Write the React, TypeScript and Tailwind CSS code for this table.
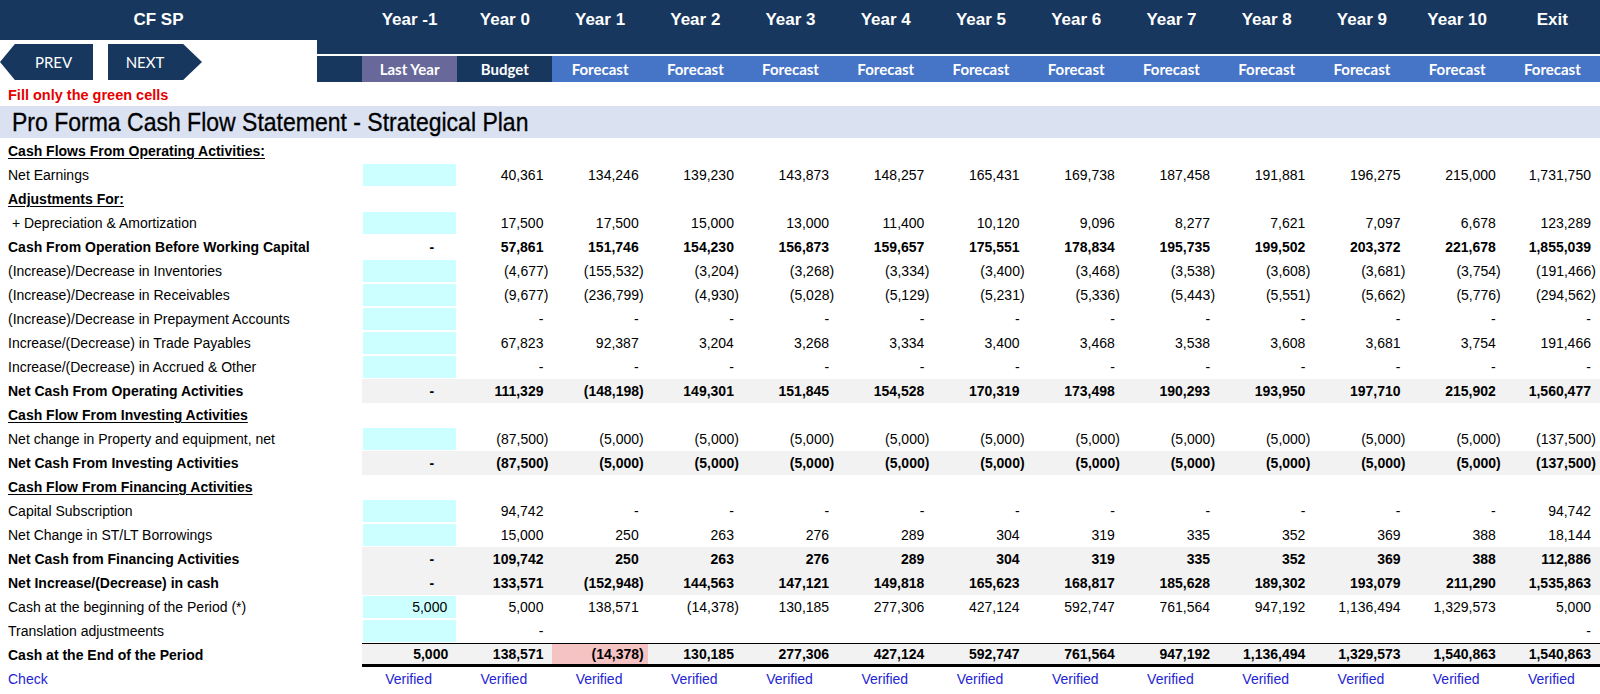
import React from 'react';

type Kind = 'section' | 'item' | 'bold' | 'total' | 'end';

type Row = {
  label: string;
  kind: Kind;
  first?: string;
  cyan?: boolean;
  values: string[];
  red?: number;
};

const years = ['Year -1', 'Year 0', 'Year 1', 'Year 2', 'Year 3', 'Year 4', 'Year 5', 'Year 6', 'Year 7', 'Year 8', 'Year 9', 'Year 10', 'Exit'];

const dash12 = Array(12).fill('-');
const empty12 = Array(12).fill('');
const inv5000 = Array(10).fill('(5,000)');

const rows: Row[] = [
  { label: 'Cash Flows From Operating Activities:', kind: 'section', values: empty12 },
  {
    label: 'Net Earnings',
    kind: 'item',
    cyan: true,
    values: ['40,361', '134,246', '139,230', '143,873', '148,257', '165,431', '169,738', '187,458', '191,881', '196,275', '215,000', '1,731,750'],
  },
  { label: 'Adjustments For:', kind: 'section', values: empty12 },
  {
    label: ' + Depreciation & Amortization',
    kind: 'item',
    cyan: true,
    values: ['17,500', '17,500', '15,000', '13,000', '11,400', '10,120', '9,096', '8,277', '7,621', '7,097', '6,678', '123,289'],
  },
  {
    label: 'Cash From Operation Before Working Capital',
    kind: 'bold',
    first: '-',
    values: ['57,861', '151,746', '154,230', '156,873', '159,657', '175,551', '178,834', '195,735', '199,502', '203,372', '221,678', '1,855,039'],
  },
  {
    label: '(Increase)/Decrease in Inventories',
    kind: 'item',
    cyan: true,
    values: ['(4,677)', '(155,532)', '(3,204)', '(3,268)', '(3,334)', '(3,400)', '(3,468)', '(3,538)', '(3,608)', '(3,681)', '(3,754)', '(191,466)'],
  },
  {
    label: '(Increase)/Decrease in Receivables',
    kind: 'item',
    cyan: true,
    values: ['(9,677)', '(236,799)', '(4,930)', '(5,028)', '(5,129)', '(5,231)', '(5,336)', '(5,443)', '(5,551)', '(5,662)', '(5,776)', '(294,562)'],
  },
  { label: '(Increase)/Decrease in Prepayment Accounts', kind: 'item', cyan: true, values: dash12 },
  {
    label: 'Increase/(Decrease) in Trade Payables',
    kind: 'item',
    cyan: true,
    values: ['67,823', '92,387', '3,204', '3,268', '3,334', '3,400', '3,468', '3,538', '3,608', '3,681', '3,754', '191,466'],
  },
  { label: 'Increase/(Decrease) in Accrued & Other', kind: 'item', cyan: true, values: dash12 },
  {
    label: 'Net Cash From Operating Activities',
    kind: 'total',
    first: '-',
    values: ['111,329', '(148,198)', '149,301', '151,845', '154,528', '170,319', '173,498', '190,293', '193,950', '197,710', '215,902', '1,560,477'],
  },
  { label: 'Cash Flow From Investing Activities', kind: 'section', values: empty12 },
  { label: 'Net change in Property and equipment, net', kind: 'item', cyan: true, values: ['(87,500)', ...inv5000, '(137,500)'] },
  { label: 'Net Cash From Investing Activities', kind: 'total', first: '-', values: ['(87,500)', ...inv5000, '(137,500)'] },
  { label: 'Cash Flow From Financing Activities', kind: 'section', values: empty12 },
  { label: 'Capital Subscription', kind: 'item', cyan: true, values: ['94,742', ...Array(10).fill('-'), '94,742'] },
  {
    label: 'Net Change in ST/LT Borrowings',
    kind: 'item',
    cyan: true,
    values: ['15,000', '250', '263', '276', '289', '304', '319', '335', '352', '369', '388', '18,144'],
  },
  {
    label: 'Net Cash from Financing Activities',
    kind: 'total',
    first: '-',
    values: ['109,742', '250', '263', '276', '289', '304', '319', '335', '352', '369', '388', '112,886'],
  },
  {
    label: 'Net Increase/(Decrease) in cash',
    kind: 'total',
    first: '-',
    values: ['133,571', '(152,948)', '144,563', '147,121', '149,818', '165,623', '168,817', '185,628', '189,302', '193,079', '211,290', '1,535,863'],
  },
  {
    label: 'Cash at the beginning of the Period (*)',
    kind: 'item',
    cyan: true,
    first: '5,000',
    values: ['5,000', '138,571', '(14,378)', '130,185', '277,306', '427,124', '592,747', '761,564', '947,192', '1,136,494', '1,329,573', '5,000'],
  },
  { label: 'Translation adjustmeents', kind: 'item', cyan: true, values: ['-', ...Array(10).fill(''), '-'] },
  {
    label: 'Cash at the End of the Period',
    kind: 'end',
    first: '5,000',
    red: 1,
    values: ['138,571', '(14,378)', '130,185', '277,306', '427,124', '592,747', '761,564', '947,192', '1,136,494', '1,329,573', '1,540,863', '1,540,863'],
  },
];

function Num({ v }: { v: string }) {
  if (!v) return null;
  const neg = v.startsWith('(');
  return (
    <span className="whitespace-pre">
      {v}
      {!neg && <span className="inline-block w-[5px]" />}
    </span>
  );
}

function SheetRow({ row }: { row: Row }) {
  const bold = row.kind !== 'item';
  const gray = row.kind === 'total' || row.kind === 'end';
  const edge = row.kind === 'end' ? 'border-t border-b-[3px] border-black' : '';
  const fill = gray ? 'bg-[#f2f2f2]' : '';

  // Year -1 の入力セル
  let first: React.ReactNode = null;
  if (row.cyan) {
    first = (
      <div className="flex items-center justify-end pr-[4px] bg-[#ccffff] border border-white">
        {row.first && <Num v={row.first} />}
      </div>
    );
  } else if (row.first === '-') {
    first = <div className={`flex items-center justify-end pr-[23px] ${fill}`}>-</div>;
  } else if (row.first) {
    first = (
      <div className={`flex items-center justify-end pr-[4px] ${fill} ${edge}`}>
        <Num v={row.first} />
      </div>
    );
  } else {
    first = <div />;
  }

  return (
    <div className={`grid grid-cols-[362px_repeat(13,minmax(0,1fr))] h-[24px] text-[14px] leading-none ${bold ? 'font-bold' : ''}`}>
      <div className={`flex items-center pl-[8px] whitespace-pre ${row.kind === 'section' ? 'underline underline-offset-[2px]' : ''}`}>
        {row.label}
      </div>
      {first}
      {row.values.map((v, i) => (
        <div
          key={i}
          className={`flex items-center justify-end pr-[4px] ${row.red === i ? 'bg-[#f6c3c4]' : fill} ${edge}`}
        >
          <Num v={v} />
        </div>
      ))}
    </div>
  );
}

export default function App() {
  return (
    <div className="w-[1600px] h-[694px] overflow-hidden bg-white text-black font-['Liberation_Sans',Arial,sans-serif]">
      {/* ヘッダー */}
      <div className="flex">
        <div className="w-[317px] shrink-0">
          <div className="h-[40px] bg-[#17375e] flex items-center justify-center text-white font-bold text-[17px]">CF SP</div>
          <div className="h-[42px] flex items-center gap-[15px] pt-[2px] font-['Lato',sans-serif] text-white text-[15px]">
            <div className="w-[93px] h-[36px] bg-[#17375e] flex items-center justify-center pl-[14px] [clip-path:polygon(0_50%,16%_0,100%_0,100%_100%,16%_100%)]">
              PREV
            </div>
            <div className="w-[94px] h-[36px] bg-[#17375e] flex items-center justify-center pr-[20px] [clip-path:polygon(0_0,80%_0,100%_50%,80%_100%,0_100%)]">
              NEXT
            </div>
          </div>
        </div>
        <div className="flex-1">
          <div className="h-[54px] bg-[#17375e] grid grid-cols-[45px_repeat(13,minmax(0,1fr))] text-white font-bold text-[17px]">
            <div />
            {years.map((y) => (
              <div key={y} className="h-[40px] flex items-center justify-center">
                {y}
              </div>
            ))}
          </div>
          <div className="h-[2px]" />
          <div className="h-[26px] grid grid-cols-[45px_repeat(13,minmax(0,1fr))] text-white font-bold text-[15px] font-['Lato',sans-serif]">
            <div className="bg-[#17375e]" />
            <div className="bg-[#68689b] flex items-center justify-center">Last Year</div>
            <div className="bg-[#17375e] flex items-center justify-center">Budget</div>
            {Array.from({ length: 11 }).map((_, i) => (
              <div key={i} className="bg-[#4674c6] flex items-center justify-center">
                Forecast
              </div>
            ))}
          </div>
        </div>
      </div>

      <div className="h-[24px] flex items-center pl-[8px] pt-[4px] text-[14.5px] font-bold text-[#e60000]">Fill only the green cells</div>

      <div className="h-[32px] bg-[#dae2f1] flex items-center pl-[12px] leading-none">
        <span className="inline-block origin-left scale-x-92 text-[25px] whitespace-nowrap [-webkit-text-stroke:0.3px_black]">
          Pro Forma Cash Flow Statement - Strategical Plan
        </span>
      </div>
      <div className="h-[1px]" />

      {rows.map((r, i) => (
        <SheetRow key={i} row={r} />
      ))}

      {/* チェック行 */}
      <div className="grid grid-cols-[362px_repeat(13,minmax(0,1fr))] h-[24px] text-[14px] leading-none text-[#2424d2]">
        <div className="flex items-center pl-[8px]">Check</div>
        {years.map((y) => (
          <div key={y} className="flex items-center justify-center pr-[2px]">
            Verified
          </div>
        ))}
      </div>
    </div>
  );
}
